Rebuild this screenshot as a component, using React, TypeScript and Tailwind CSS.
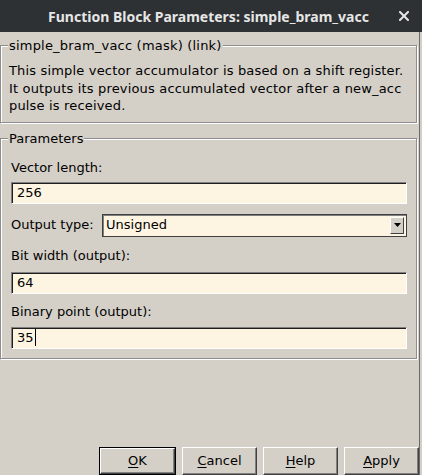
import React from "react";

function Field({ value, cursor }: { value: string; cursor?: boolean }) {
  return (
    <div className="h-[22px] w-full bg-[#fdf4e1] border-t border-l border-t-[#808080] border-l-[#808080] border-b border-r border-b-white border-r-white shadow-[inset_1px_1px_0_#1e1e1e] flex items-center pl-[5px] text-[13px] text-black">
      <span>{value}</span>
      {cursor && <span className="inline-block w-px h-[17px] bg-black ml-[1px]" />}
    </div>
  );
}

function Btn({ label, u, def }: { label: string; u: number; def?: boolean }) {
  const inner = (
    <div className="h-full w-full bg-[#d4d0c8] border-t border-l border-t-white border-l-white border-r border-b border-r-[#404040] border-b-[#404040] shadow-[inset_-1px_-1px_0_#808080] flex items-center justify-center text-[13px] text-black">
      <span>
        {label.slice(0, u)}
        <span className="underline underline-offset-2">{label[u]}</span>
        {label.slice(u + 1)}
      </span>
    </div>
  );
  if (def) {
    return <div className="w-[77px] h-[28px] border border-black">{inner}</div>;
  }
  return <div className="w-[75px] h-[28px]">{inner}</div>;
}

export default function App() {
  return (
    <div className="w-[422px] h-[475px] overflow-hidden bg-[#d4d0c8] flex flex-col font-['DejaVu_Sans',sans-serif] text-black">
      <div className="h-[32px] shrink-0 bg-[#2d3133] grid grid-cols-[36px_1fr_36px] items-center">
        <div />
        <div className="text-center pr-[5px] text-[14px] font-bold text-[#e6e6e6] font-['Noto_Sans',sans-serif]">
          Function Block Parameters: simple_bram_vacc
        </div>
        <div className="flex items-center justify-center">
          <svg width="10" height="10" viewBox="0 0 10 10">
            <path d="M1 1 L9 9 M9 1 L1 9" stroke="#e6e6e6" strokeWidth="2" strokeLinecap="square" />
          </svg>
        </div>
      </div>
      <div className="w-[420px] flex-1 border-r border-r-[#6a6a6a] flex flex-col">
        <fieldset className="mt-[6px] w-[417px] border border-[#8d8d8d] shadow-[1px_1px_0_#fff,inset_1px_1px_0_#fff] p-0">
          <legend className="ml-[7px] px-[1px] bg-[#d4d0c8] text-[13px] leading-[15px] tracking-[0.2px]">
            simple_bram_vacc (mask) (link)
          </legend>
          <div className="pl-[8px] pt-[9px] pb-[7px] pr-[2px]">
            <p className="text-[13px] leading-[17.5px] tracking-[0.17px]">
              This simple vector accumulator is based on a shift register.
              <br />
              It outputs its previous accumulated vector after a new_acc
              <br />
              pulse is received.
            </p>
          </div>
        </fieldset>
        <fieldset className="mt-[8px] w-[417px] border border-[#8d8d8d] shadow-[1px_1px_0_#fff,inset_1px_1px_0_#fff] p-0">
          <legend className="ml-[7px] px-[1px] bg-[#d4d0c8] text-[13px] leading-[15px]">
            Parameters
          </legend>
          <div className="pl-[10px] pr-[9px] pt-[12px] pb-[9px]">
            <div className="h-[20px] flex items-center text-[13px]">Vector length:</div>
            <div className="mt-[4px]">
              <Field value="256" />
            </div>
            <div className="mt-[10px] h-[23px] flex items-center">
              <div className="w-[91px] text-[13px]">Output type:</div>
              <div className="flex-1 h-[23px] bg-[#fdf4e1] border border-[#404040] shadow-[inset_1px_1px_0_#808080] flex items-center">
                <span className="flex-1 pl-[3px] text-[13px]">Unsigned</span>
                <div className="w-[14px] h-[17px] mr-[2px] bg-[#d4d0c8] border-t border-l border-t-white border-l-white border-r border-b border-r-[#404040] border-b-[#404040] flex items-center justify-center">
                  <svg width="7" height="4" viewBox="0 0 7 4">
                    <path d="M0 0 H7 L3.5 4 Z" fill="#000" />
                  </svg>
                </div>
              </div>
            </div>
            <div className="mt-[9px] h-[20px] flex items-center text-[13px]">Bit width (output):</div>
            <div className="mt-[6px]">
              <Field value="64" />
            </div>
            <div className="mt-[8px] h-[20px] flex items-center text-[13px]">Binary point (output):</div>
            <div className="mt-[5px]">
              <Field value="35" cursor />
            </div>
          </div>
        </fieldset>
        <div className="mt-[88px] flex justify-end gap-[6px]">
          <Btn label="OK" u={0} def />
          <Btn label="Cancel" u={0} />
          <Btn label="Help" u={0} />
          <Btn label="Apply" u={0} />
        </div>
      </div>
    </div>
  );
}
